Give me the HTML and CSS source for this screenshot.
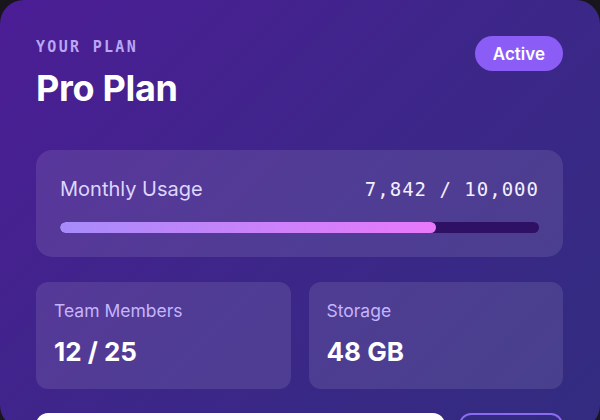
FILE: index.html
```html
<!DOCTYPE html>
<html lang="en">
<head>
<meta charset="utf-8">
<title>Your Plan</title>
<link rel="stylesheet" href="styles.css">
</head>
<body>
<div class="card">
  <div class="header">
    <div class="titles">
      <div class="eyebrow">YOUR PLAN</div>
      <div class="plan-name">Pro Plan</div>
    </div>
    <span class="badge">Active</span>
  </div>

  <div class="usage">
    <div class="usage-row">
      <span class="usage-label">Monthly Usage</span>
      <span class="usage-value">7,842 / 10,000</span>
    </div>
    <div class="track"><div class="fill" style="width: 78.42%"></div></div>
  </div>

  <div class="stats">
    <div class="stat">
      <div class="stat-label">Team Members</div>
      <div class="stat-value">12 / 25</div>
    </div>
    <div class="stat">
      <div class="stat-label">Storage</div>
      <div class="stat-value">48 GB</div>
    </div>
  </div>

  <div class="actions">
    <button class="btn btn-primary">Upgrade Plan</button>
    <button class="btn btn-outline">Manage</button>
  </div>
</div>
</body>
</html>
```

FILE: styles.css
```css
* { box-sizing: border-box; }

html, body {
  margin: 0;
  padding: 0;
  background: #18161c;
}

body {
  width: 600px;
  height: 420px;
  overflow: hidden;
  font-family: "Inter", "DejaVu Sans", sans-serif;
}

.card {
  width: 600px;
  height: 429px;
  border-radius: 24px;
  padding: 36px 37px 36px 36px;
  background: linear-gradient(135deg, #4c1d95 0%, #3d2689 50%, #322c80 100%);
  color: #ffffff;
}

.header {
  display: flex;
  justify-content: space-between;
  align-items: flex-start;
}

.eyebrow {
  font-family: "DejaVu Sans Mono", monospace;
  font-size: 15px;
  line-height: 22px;
  letter-spacing: 2.3px;
  color: #b9a6f5;
  font-weight: 700;
}

.plan-name {
  margin-top: 10px;
  font-size: 36px;
  line-height: 40px;
  font-weight: 700;
  letter-spacing: -0.3px;
}

.badge {
  display: inline-flex;
  align-items: center;
  justify-content: center;
  height: 35px;
  padding: 0 18px;
  border-radius: 18px;
  background: #8b5cf6;
  color: #ffffff;
  font-size: 17px;
  font-weight: 600;
}

.usage {
  margin-top: 42px;
  padding: 24px;
  border-radius: 16px;
  background: rgba(255, 255, 255, 0.1);
}

.usage-row {
  display: flex;
  justify-content: space-between;
  align-items: center;
  height: 30px;
}

.usage-label {
  font-size: 20px;
  color: #ddd6fe;
}

.usage-value {
  font-family: "DejaVu Sans Mono", monospace;
  font-size: 19px;
  letter-spacing: 1px;
  color: #f3efff;
}

.track {
  margin-top: 18px;
  height: 11px;
  border-radius: 6px;
  background: #2e1065;
  overflow: hidden;
}

.fill {
  height: 100%;
  border-radius: 6px;
  background: linear-gradient(90deg, #a78bfa, #e879f9);
}

.stats {
  margin-top: 25px;
  display: grid;
  grid-template-columns: 1fr 1fr;
  gap: 18px;
}

.stat {
  height: 107px;
  padding: 18px;
  border-radius: 12px;
  background: rgba(255, 255, 255, 0.1);
}

.stat-label {
  font-size: 17.5px;
  line-height: 22px;
  color: #c4b5fd;
}

.stat-value {
  margin-top: 14px;
  font-size: 26px;
  line-height: 32px;
  font-weight: 700;
  color: #ffffff;
}

.actions {
  margin-top: 24px;
  display: flex;
  gap: 14px;
}

.btn {
  height: 46px;
  border-radius: 12px;
  font-family: "Inter", sans-serif;
  font-size: 16px;
  font-weight: 600;
}

.btn-primary {
  flex: 1;
  border: none;
  background: #ffffff;
  color: #4c1d95;
}

.btn-outline {
  width: 104px;
  border: 2px solid #8b6cf0;
  background: transparent;
  color: #ffffff;
}
```
